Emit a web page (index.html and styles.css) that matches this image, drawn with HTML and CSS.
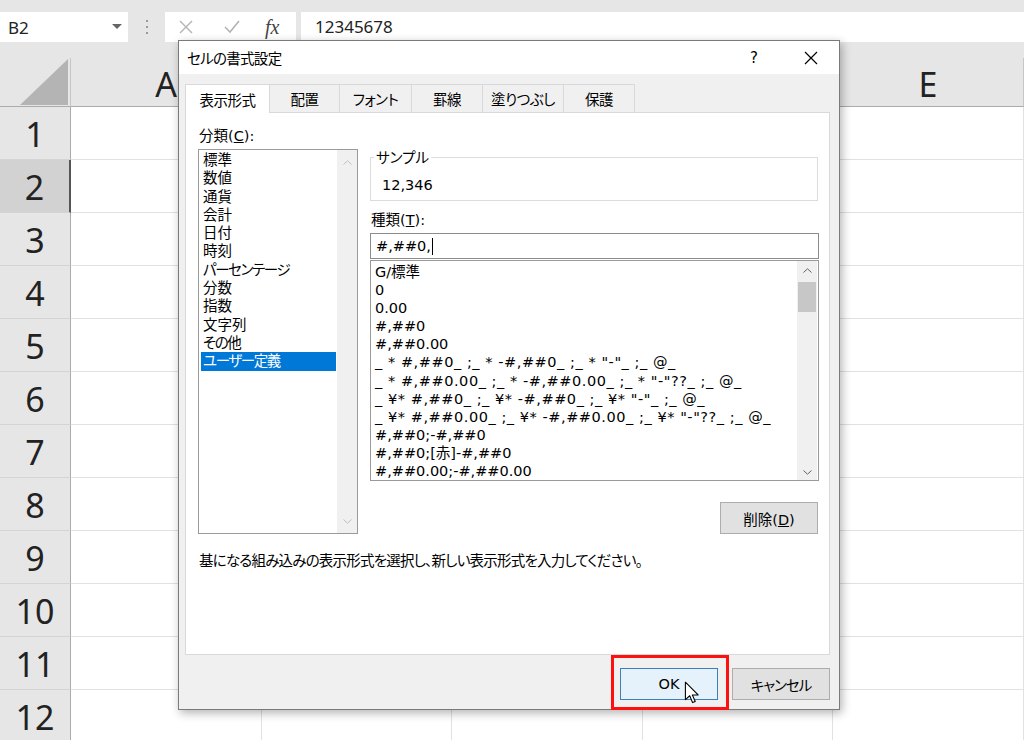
FILE: index.html
```html
<!DOCTYPE html>
<html lang="ja">
<head>
    <meta charset="UTF-8">
    <meta name="viewport" content="width=device-width, initial-scale=1.0">
    <title>セルの書式設定</title>
    <link rel="stylesheet" href="styles.css">
</head>
<body>
    <div class="formula-bar">
        <div class="name-box">
            <span>B2</span>
            <svg width="10" height="6" viewBox="0 0 10 6"><path d="M0 0 L10 0 L5 5 Z" fill="#666"/></svg>
        </div>
        <div class="grip"><i></i><i></i><i></i></div>
        <div class="fx-buttons">
            <svg class="fx-cancel" width="14" height="14" viewBox="0 0 14 14"><path d="M1 1 L13 13 M13 1 L1 13" stroke="#b3b3b3" stroke-width="1.4"/></svg>
            <svg class="fx-enter" width="16" height="14" viewBox="0 0 16 14"><path d="M1 7 L6 12 L15 1" fill="none" stroke="#b3b3b3" stroke-width="1.6"/></svg>
            <span class="fx-label">fx</span>
        </div>
        <div class="formula-input">12345678</div>
    </div>

    <div class="sheet">
        <div class="corner"><svg width="71" height="49" viewBox="0 0 71 49"><polygon points="20,47 68,47 68,1" fill="#b4b4b4"/></svg></div>
        <div class="col-head">A</div>
        <div class="col-head">B</div>
        <div class="col-head">C</div>
        <div class="col-head">D</div>
        <div class="col-head">E</div>

        <div class="row-head">1</div><div class="cell"></div><div class="cell"></div><div class="cell"></div><div class="cell"></div><div class="cell"></div>
        <div class="row-head selected">2</div><div class="cell"></div><div class="cell"></div><div class="cell"></div><div class="cell"></div><div class="cell"></div>
        <div class="row-head">3</div><div class="cell"></div><div class="cell"></div><div class="cell"></div><div class="cell"></div><div class="cell"></div>
        <div class="row-head">4</div><div class="cell"></div><div class="cell"></div><div class="cell"></div><div class="cell"></div><div class="cell"></div>
        <div class="row-head">5</div><div class="cell"></div><div class="cell"></div><div class="cell"></div><div class="cell"></div><div class="cell"></div>
        <div class="row-head">6</div><div class="cell"></div><div class="cell"></div><div class="cell"></div><div class="cell"></div><div class="cell"></div>
        <div class="row-head">7</div><div class="cell"></div><div class="cell"></div><div class="cell"></div><div class="cell"></div><div class="cell"></div>
        <div class="row-head">8</div><div class="cell"></div><div class="cell"></div><div class="cell"></div><div class="cell"></div><div class="cell"></div>
        <div class="row-head">9</div><div class="cell"></div><div class="cell"></div><div class="cell"></div><div class="cell"></div><div class="cell"></div>
        <div class="row-head">10</div><div class="cell"></div><div class="cell"></div><div class="cell"></div><div class="cell"></div><div class="cell"></div>
        <div class="row-head">11</div><div class="cell"></div><div class="cell"></div><div class="cell"></div><div class="cell"></div><div class="cell"></div>
        <div class="row-head">12</div><div class="cell"></div><div class="cell"></div><div class="cell"></div><div class="cell"></div><div class="cell"></div>
    </div>

    <div class="dialog">
        <div class="dialog-title">
            <span class="title-text">セルの書式設定</span>
            <span class="title-help">?</span>
            <svg class="title-close" width="14" height="14" viewBox="0 0 14 14"><path d="M1 1 L13 13 M13 1 L1 13" stroke="#000" stroke-width="1.2"/></svg>
        </div>
        <div class="tabs">
            <div class="tab active">表示形式</div>
            <div class="tab tab-2">配置</div>
            <div class="tab tab-3">フォント</div>
            <div class="tab tab-4">罫線</div>
            <div class="tab tab-5">塗りつぶし</div>
            <div class="tab tab-6">保護</div>
        </div>
        <div class="panel">
            <div class="panel-cols">
                <div class="category">
                    <div class="label">分類(<u>C</u>):</div>
                    <div class="listbox category-list">
                        <ul class="items">
                            <li>標準</li>
                            <li>数値</li>
                            <li>通貨</li>
                            <li>会計</li>
                            <li>日付</li>
                            <li>時刻</li>
                            <li class="kana">パーセンテージ</li>
                            <li>分数</li>
                            <li>指数</li>
                            <li>文字列</li>
                            <li class="kana">その他</li>
                            <li class="kana selected">ユーザー定義</li>
                        </ul>
                        <div class="scrollbar disabled">
                            <svg class="arrow-up" width="9" height="5" viewBox="0 0 9 5"><path d="M0.5 4.5 L4.5 0.8 L8.5 4.5" fill="none" stroke="currentColor"/></svg>
                            <svg class="arrow-down" width="9" height="5" viewBox="0 0 9 5"><path d="M0.5 0.5 L4.5 4.2 L8.5 0.5" fill="none" stroke="currentColor"/></svg>
                        </div>
                    </div>
                </div>
                <div class="format">
                    <fieldset class="sample">
                        <legend>サンプル</legend>
                        <div class="sample-value">12,346</div>
                    </fieldset>
                    <div class="label type-label">種類(<u>T</u>):</div>
                    <div class="text-input">#,##0,<span class="caret"></span></div>
                    <div class="listbox format-list">
                        <ul class="items">
                            <li>G/標準</li>
                            <li>0</li>
                            <li>0.00</li>
                            <li>#,##0</li>
                            <li>#,##0.00</li>
                            <li class="wide">_ * #,##0_ ;_ * -#,##0_ ;_ * "-"_ ;_ @_</li>
                            <li class="wide">_ * #,##0.00_ ;_ * -#,##0.00_ ;_ * "-"??_ ;_ @_</li>
                            <li class="wide">_ ¥* #,##0_ ;_ ¥* -#,##0_ ;_ ¥* "-"_ ;_ @_</li>
                            <li class="wide">_ ¥* #,##0.00_ ;_ ¥* -#,##0.00_ ;_ ¥* "-"??_ ;_ @_</li>
                            <li>#,##0;-#,##0</li>
                            <li>#,##0;[赤]-#,##0</li>
                            <li>#,##0.00;-#,##0.00</li>
                        </ul>
                        <div class="scrollbar">
                            <svg class="arrow-up" width="9" height="5" viewBox="0 0 9 5"><path d="M0.5 4.5 L4.5 0.8 L8.5 4.5" fill="none" stroke="currentColor"/></svg>
                            <div class="thumb"></div>
                            <svg class="arrow-down" width="9" height="5" viewBox="0 0 9 5"><path d="M0.5 0.5 L4.5 4.2 L8.5 0.5" fill="none" stroke="currentColor"/></svg>
                        </div>
                    </div>
                    <div class="delete-row">
                        <button class="btn">削除(<u>D</u>)</button>
                    </div>
                </div>
            </div>
            <p class="hint">基になる組み込みの表示形式を選択し、新しい表示形式を入力してください。</p>
        </div>
        <div class="dialog-buttons">
            <button class="btn btn-ok">OK</button>
            <button class="btn btn-cancel">キャンセル</button>
        </div>
    </div>

    <div class="highlight"></div>
    <svg class="pointer" width="16" height="24" viewBox="0 0 13 20">
        <path d="M1 1 L1 15.5 L4.6 12.3 L7 18 L9.2 17.1 L6.8 11.6 L11.6 11.6 Z" fill="#fff" stroke="#000" stroke-width="0.9" stroke-linejoin="round"/>
    </svg>
</body>
</html>
```

FILE: styles.css
```css
html, body {
    margin: 0;
}
body {
    position: relative;
    width: 1024px;
    height: 740px;
    overflow: hidden;
    background: #fff;
    font-family: "Noto Sans", "Noto Sans CJK JP", sans-serif;
    color: #222;
}

/* formula bar */
.formula-bar {
    display: flex;
    align-items: flex-start;
    height: 58px;
    padding-top: 12px;
    box-sizing: border-box;
    background: #e6e6e6;
}
.name-box {
    display: flex;
    align-items: center;
    justify-content: space-between;
    width: 128px;
    height: 30px;
    padding: 0 6px 0 8px;
    box-sizing: border-box;
    background: #fff;
    font-size: 17px;
}
.grip {
    display: flex;
    flex-direction: column;
    align-items: center;
    justify-content: center;
    gap: 4px;
    width: 37px;
    height: 30px;
}
.grip i {
    width: 2px;
    height: 2px;
    background: #9a9a9a;
}
.fx-buttons {
    display: flex;
    align-items: center;
    width: 131px;
    height: 30px;
    padding-left: 14px;
    box-sizing: border-box;
    background: #fff;
}
.fx-enter {
    margin-left: 31px;
}
.fx-label {
    margin-left: 25px;
    font-family: "Liberation Serif", serif;
    font-style: italic;
    font-size: 20px;
    color: #444;
}
.formula-input {
    flex: 1;
    height: 30px;
    margin-left: 5px;
    padding-left: 14px;
    background: #fff;
    font-size: 17px;
    line-height: 30px;
}

/* sheet */
.sheet {
    display: grid;
    grid-template-columns: 71px 191px 190px 191px 190px 191px;
    grid-template-rows: 49px repeat(12, 53px);
}
.corner {
    background: #e6e6e6;
    border-right: 1px solid #c6c6c6;
    border-bottom: 1px solid #ababab;
    box-sizing: border-box;
}
.corner svg {
    display: block;
}
.col-head {
    display: flex;
    align-items: center;
    justify-content: center;
    padding-top: 3px;
    box-sizing: border-box;
    background: #e6e6e6;
    border-right: 1px solid #c6c6c6;
    border-bottom: 1px solid #ababab;
    font-size: 34px;
}
.row-head {
    display: flex;
    align-items: center;
    justify-content: center;
    padding-top: 2px;
    box-sizing: border-box;
    background: #e6e6e6;
    border-right: 1px solid #ababab;
    border-bottom: 1px solid #d4d4d4;
    font-size: 34px;
}
.row-head.selected {
    background: #d2d2d2;
    border-right: 2px solid #555;
}
.cell {
    border-right: 1px solid #e1e1e1;
    border-bottom: 1px solid #e1e1e1;
}

/* dialog */
.dialog {
    position: absolute;
    left: 178px;
    top: 40px;
    width: 662px;
    height: 670px;
    box-sizing: border-box;
    border: 1px solid #7a7a7a;
    background: #f0f0f0;
    box-shadow: 2px 3px 9px rgba(0, 0, 0, 0.3);
    font-family: "DejaVu Sans", "Noto Sans CJK JP", sans-serif;
    font-feature-settings: "palt";
    font-size: 14.5px;
    color: #000;
}
.dialog-title {
    display: flex;
    align-items: center;
    height: 33px;
    padding-left: 8px;
    background: #fff;
    font-family: "Noto Sans CJK JP", sans-serif;
    font-size: 14.5px;
}
.title-text {
    flex: 1;
    letter-spacing: -0.7px;
}
.title-help {
    margin-right: 46px;
    font-family: "DejaVu Sans", sans-serif;
    font-size: 15px;
}
.title-close {
    margin-right: 21px;
}
.tabs {
    display: flex;
    margin-top: 10px;
    padding-left: 6px;
    height: 28px;
    position: relative;
    z-index: 1;
}
.tab {
    display: flex;
    align-items: center;
    justify-content: center;
    width: 85px;
    margin-right: -1px;
    box-sizing: border-box;
    border: 1px solid #d9d9d9;
    border-bottom: none;
    background: #f0f0f0;
    font-family: "Noto Sans CJK JP", sans-serif;
    letter-spacing: -0.5px;
}
.tab.active {
    height: 29px;
    background: #fff;
}
.tab-2 { width: 71px; }
.tab-3 { width: 73px; }
.tab-4 { width: 72px; }
.tab-5 { width: 82px; }
.tab-6 { width: 72px; }

.panel {
    height: 543px;
    margin: 0 9px 0 6px;
    padding: 14px 10px 0 12px;
    box-sizing: border-box;
    border: 1px solid #d9d9d9;
    background: #fff;
}
.panel-cols {
    display: grid;
    grid-template-columns: 160px 449px;
    column-gap: 12px;
}
.label {
    height: 18px;
    line-height: 18px;
    padding-left: 1px;
}
.listbox {
    display: grid;
    box-sizing: border-box;
    border: 1px solid #9a9a9a;
    overflow: hidden;
}
.items {
    list-style: none;
    margin: 0;
    padding: 0;
    line-height: 18.3px;
    white-space: nowrap;
    overflow: hidden;
}
.category-list {
    height: 385px;
    margin-top: 4px;
    grid-template-columns: 1fr 20px;
}
.category-list .items {
    padding: 1px 1px 0 2px;
}
.category-list li {
    padding-left: 2px;
}
.category-list li.kana {
    letter-spacing: -1.4px;
}
.category-list li.selected {
    background: #0078d7;
    color: #fff;
}
.scrollbar {
    display: flex;
    flex-direction: column;
    align-items: center;
    background: #f0f0f0;
    color: #606060;
}
.scrollbar.disabled {
    color: #bfbfbf;
}
.category-list .arrow-up {
    margin-top: 10px;
}
.category-list .arrow-down {
    margin-top: auto;
    margin-bottom: 9px;
}

.format {
    margin-top: 21px;
}
.sample {
    margin: 0 1px 0 0;
    padding: 10px 0 6px 3px;
    border: 1px solid #dcdcdc;
    line-height: 18px;
}
.sample legend {
    padding: 0 2px;
    font-family: "Noto Sans CJK JP", sans-serif;
}
.sample-value {
    margin-left: 8px;
}
.type-label {
    margin-top: 10px;
}
.text-input {
    display: flex;
    align-items: center;
    height: 26px;
    margin-top: 4px;
    padding-left: 5px;
    box-sizing: border-box;
    border: 1px solid #8c8c8c;
    background: #fff;
}
.caret {
    width: 1px;
    height: 17px;
    margin-left: 1px;
    background: #000;
}
.format-list {
    height: 221px;
    margin-top: 1px;
    grid-template-columns: 1fr 20px;
    padding-right: 1px;
}
.format-list .items {
    padding: 2px 0 0 4px;
    line-height: 18.1px;
}
.format-list li.wide {
    letter-spacing: 0.55px;
}
.format-list .arrow-up {
    margin-top: 7px;
}
.thumb {
    width: 18px;
    height: 30px;
    margin-top: 9px;
    background: #c7c7c7;
}
.format-list .arrow-down {
    margin-top: auto;
    margin-bottom: 5px;
}
.delete-row {
    display: flex;
    justify-content: flex-end;
    margin-top: 21px;
    padding-right: 1px;
}
.btn {
    width: 98px;
    height: 32px;
    padding: 0;
    box-sizing: border-box;
    border: 1px solid #adadad;
    background: #e1e1e1;
    font-family: "DejaVu Sans", "Noto Sans CJK JP", sans-serif;
    font-feature-settings: "palt";
    font-size: 14.5px;
    color: #000;
}
.btn-cancel {
    letter-spacing: -1px;
}
.hint {
    margin: 18px 0 0;
    line-height: 18px;
    padding-left: 1px;
    letter-spacing: -0.8px;
}
.dialog-buttons {
    display: flex;
    justify-content: flex-end;
    gap: 14px;
    padding: 13px 9px 0 0;
}
.btn-ok {
    background: #e5f1fb;
    border-color: #3d7fb8;
}

/* annotation */
.highlight {
    position: absolute;
    left: 611px;
    top: 655px;
    width: 118px;
    height: 55px;
    box-sizing: border-box;
    border: 3px solid #ff1010;
}
.pointer {
    position: absolute;
    left: 684px;
    top: 681px;
}
```
